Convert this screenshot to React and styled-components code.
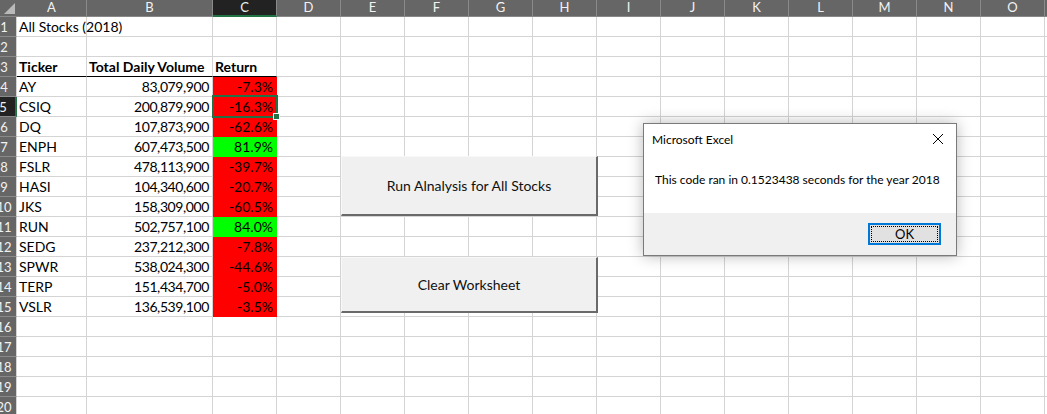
import React from "react";
import styled, { createGlobalStyle } from "styled-components";

const GlobalStyle = createGlobalStyle`
  html, body {
    margin: 0;
    padding: 0;
    background: #ffffff;
    overflow: hidden;
  }
  body {
    font-family: "Lato", "Liberation Sans", sans-serif;
  }
`;

const COLS = ["A", "B", "C", "D", "E", "F", "G", "H", "I", "J", "K", "L", "M", "N", "O", ""];
const WIDTHS = [70, 126, 64, 64, 64, 64, 64, 64, 64, 64, 64, 64, 64, 64, 64, 64];

const stocks = [
  ["AY", "83,079,900", "-7.3%"],
  ["CSIQ", "200,879,900", "-16.3%"],
  ["DQ", "107,873,900", "-62.6%"],
  ["ENPH", "607,473,500", "81.9%"],
  ["FSLR", "478,113,900", "-39.7%"],
  ["HASI", "104,340,600", "-20.7%"],
  ["JKS", "158,309,000", "-60.5%"],
  ["RUN", "502,757,100", "84.0%"],
  ["SEDG", "237,212,300", "-7.8%"],
  ["SPWR", "538,024,300", "-44.6%"],
  ["TERP", "151,434,700", "-5.0%"],
  ["VSLR", "136,539,100", "-3.5%"],
];

function cellFor(row, col) {
  if (row === 1 && col === 0) return { text: "All Stocks (2018)", overflow: true };
  if (row === 3) {
    const heads = ["Ticker", "Total Daily Volume", "Return"];
    if (col < 3) return { text: heads[col], bold: true, underline: true };
  }
  if (row >= 4 && row <= 15) {
    const s = stocks[row - 4];
    if (col === 0) return { text: s[0] };
    if (col === 1) return { text: s[1], right: true, tight: true };
    if (col === 2) {
      const up = !s[2].startsWith("-");
      return { text: s[2], right: true, fill: up ? "#00ff00" : "#ff0000" };
    }
  }
  return {};
}

export default function App() {
  const rows = Array.from({ length: 20 }, (_, i) => i + 1);
  return (
    <>
      <GlobalStyle />
      <Sheet>
        <Grid>
          <Corner>
            <CornerTriangle />
          </Corner>
          {COLS.map((c, i) => (
            <ColHead key={i} $selected={c === "C"}>{c}</ColHead>
          ))}
          {rows.map((r) => (
            <React.Fragment key={r}>
              <RowHead $selected={r === 5}>
                <RowNum>{r}</RowNum>
              </RowHead>
              {COLS.map((c, ci) => {
                const cell = cellFor(r, ci);
                return (
                  <Cell
                    key={ci}
                    $fill={cell.fill}
                    $bold={cell.bold}
                    $right={cell.right}
                    $tight={cell.tight}
                    $underline={cell.underline}
                    $overflow={cell.overflow}
                  >
                    {cell.text}
                  </Cell>
                );
              })}
            </React.Fragment>
          ))}
        </Grid>

        <Selection>
          <FillHandle />
        </Selection>

        <MacroButton style={{ top: 156, height: 60 }}>Run Alnalysis for All Stocks</MacroButton>
        <MacroButton style={{ top: 257, height: 56 }}>Clear Worksheet</MacroButton>

        <Dialog>
          <DialogBody>
            <DialogTitleBar>
              <DialogTitle>Microsoft Excel</DialogTitle>
              <CloseButton>
                <svg width="12" height="12" viewBox="0 0 12 12">
                  <path d="M1 1 L11 11 M11 1 L1 11" stroke="#000" strokeWidth="1" fill="none" />
                </svg>
              </CloseButton>
            </DialogTitleBar>
            <DialogMessage>This code ran in 0.1523438 seconds for the year 2018</DialogMessage>
          </DialogBody>
          <DialogFooter>
            <OkButton>
              <OkFocus>OK</OkFocus>
            </OkButton>
          </DialogFooter>
        </Dialog>
      </Sheet>
    </>
  );
}

const Sheet = styled.div`
  position: relative;
  width: 1047px;
  height: 414px;
  overflow: hidden;
`;

const Grid = styled.div`
  display: grid;
  grid-template-columns: 17px ${WIDTHS.map((w) => w + "px").join(" ")};
  grid-template-rows: 17px repeat(20, 20px);
  font-size: 14px;
  color: #000;
`;

const Corner = styled.div`
  position: relative;
  background: #666666;
  border-bottom: 1px solid #888;
  box-sizing: border-box;
`;

const CornerTriangle = styled.div`
  position: absolute;
  right: 2px;
  bottom: 2px;
  width: 0;
  height: 0;
  border-left: 11px solid transparent;
  border-bottom: 11px solid #b9b9b9;
`;

const ColHead = styled.div`
  box-sizing: border-box;
  background: ${(p) => (p.$selected ? "#222222" : "#666666")};
  color: ${(p) => (p.$selected ? "#e8f4ec" : "#f2f2f2")};
  border-right: 1px solid #8a8a8a;
  border-bottom: ${(p) => (p.$selected ? "2px solid #217346" : "1px solid #888")};
  display: flex;
  align-items: center;
  justify-content: center;
  font-size: 13px;
  line-height: 1;
  padding-bottom: ${(p) => (p.$selected ? "0" : "1px")};
`;

const RowHead = styled.div`
  box-sizing: border-box;
  background: ${(p) => (p.$selected ? "#222222" : "#666666")};
  color: #f2f2f2;
  border-bottom: 1px solid #8a8a8a;
  border-right: ${(p) => (p.$selected ? "2px solid #217346" : "1px solid #d4d4d4")};
  display: flex;
  justify-content: flex-end;
  align-items: center;
  overflow: hidden;
  font-size: 13px;
`;

const RowNum = styled.span`
  flex: 0 0 24px;
  text-align: center;
`;

const Cell = styled.div`
  box-sizing: border-box;
  background: ${(p) => p.$fill || "#ffffff"};
  border-right: 1px solid ${(p) => p.$fill || "#d4d4d4"};
  border-bottom: 1px solid
    ${(p) => (p.$underline ? "#000000" : p.$fill || "#d4d4d4")};
  display: flex;
  align-items: flex-end;
  justify-content: ${(p) => (p.$right ? "flex-end" : "flex-start")};
  padding: 0 3px 0 2px;
  font-weight: ${(p) => (p.$bold ? 700 : 400)};
  letter-spacing: ${(p) => (p.$tight ? "-0.4px" : "0")};
  white-space: nowrap;
  overflow: ${(p) => (p.$overflow ? "visible" : "hidden")};
  position: ${(p) => (p.$overflow ? "relative" : "static")};
  z-index: ${(p) => (p.$overflow ? 1 : "auto")};
  line-height: 18px;
`;

const Selection = styled.div`
  position: absolute;
  left: 212px;
  top: 95px;
  width: 66px;
  height: 23px;
  box-sizing: border-box;
  border: 2px solid #217346;
`;

const FillHandle = styled.div`
  position: absolute;
  right: -4px;
  bottom: -4px;
  width: 5px;
  height: 5px;
  background: #217346;
  border: 1px solid #ffffff;
`;

const MacroButton = styled.div`
  position: absolute;
  left: 341px;
  width: 257px;
  box-sizing: border-box;
  background: #f0f0f0;
  border-top: 1px solid #f8f8f8;
  border-left: 1px solid #f8f8f8;
  border-right: 2px solid #6a6a6a;
  border-bottom: 2px solid #6a6a6a;
  display: flex;
  align-items: center;
  justify-content: center;
  font-size: 14px;
  color: #111;
`;

const Dialog = styled.div`
  position: absolute;
  left: 643px;
  top: 123px;
  width: 314px;
  height: 133px;
  box-sizing: border-box;
  border: 1px solid #7a7a7a;
  background: #ffffff;
  box-shadow: 0 0 14px rgba(0, 0, 0, 0.28);
  display: flex;
  flex-direction: column;
  font-family: "Lato", "Noto Sans", sans-serif;
  font-size: 12px;
  color: #000;
`;

const DialogBody = styled.div`
  flex: 1;
  display: flex;
  flex-direction: column;
  background: #ffffff;
`;

const DialogTitleBar = styled.div`
  display: flex;
  align-items: center;
  justify-content: space-between;
  height: 30px;
  padding: 0 10px 0 8px;
`;

const DialogTitle = styled.span`
  font-size: 12px;
`;

const CloseButton = styled.div`
  display: flex;
  align-items: center;
  justify-content: center;
  width: 16px;
  height: 16px;
`;

const DialogMessage = styled.div`
  padding: 18px 0 0 11px;
  font-size: 12px;
`;

const DialogFooter = styled.div`
  height: 42px;
  background: #f0f0f0;
  display: flex;
  align-items: center;
  justify-content: flex-end;
  padding-right: 15px;
`;

const OkButton = styled.div`
  width: 73px;
  height: 22px;
  box-sizing: border-box;
  border: 2px solid #0078d7;
  background: #e1e1e1;
  padding: 1px;
  margin-bottom: 1px;
`;

const OkFocus = styled.div`
  height: 100%;
  box-sizing: border-box;
  border: 1px dotted #000;
  display: flex;
  align-items: center;
  justify-content: center;
  font-size: 13px;
`;
